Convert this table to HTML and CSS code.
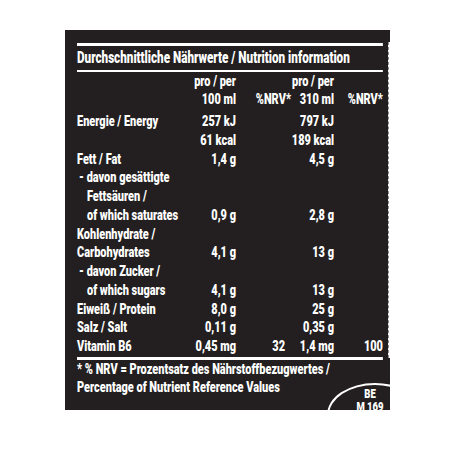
FILE: index.html
```html
<!DOCTYPE html>
<html lang="de">
<head>
  <meta charset="UTF-8">
  <meta name="viewport" content="width=device-width, initial-scale=1.0">
  <title>Nährwerte</title>
  <link rel="stylesheet" href="styles.css">
</head>
<body>
  <div class="panel">
    <div class="inner">
      <div class="rule rule-top"></div>
      <h1>Durchschnittliche Nährwerte / Nutrition information</h1>
      <div class="rule rule-mid"></div>

      <div class="table head">
        <div></div>
        <div class="num">pro / per<br>100 ml</div>
        <div class="num nrv">%NRV*</div>
        <div class="num">pro / per<br>310 ml</div>
        <div class="num nrv">%NRV*</div>
      </div>

      <div class="table body">
        <div>Energie / Energy</div><div class="num">257 kJ</div><div></div><div class="num">797 kJ</div><div></div>
        <div></div><div class="num">61 kcal</div><div></div><div class="num">189 kcal</div><div></div>
        <div>Fett / Fat</div><div class="num">1,4 g</div><div></div><div class="num">4,5 g</div><div></div>
        <div class="sub">- davon gesättigte</div><div></div><div></div><div></div><div></div>
        <div class="sub2">Fettsäuren /</div><div></div><div></div><div></div><div></div>
        <div class="sub2">of which saturates</div><div class="num">0,9 g</div><div></div><div class="num">2,8 g</div><div></div>
        <div>Kohlenhydrate /</div><div></div><div></div><div></div><div></div>
        <div>Carbohydrates</div><div class="num">4,1 g</div><div></div><div class="num">13 g</div><div></div>
        <div class="sub">- davon Zucker /</div><div></div><div></div><div></div><div></div>
        <div class="sub2">of which sugars</div><div class="num">4,1 g</div><div></div><div class="num">13 g</div><div></div>
        <div>Eiweiß / Protein</div><div class="num">8,0 g</div><div></div><div class="num">25 g</div><div></div>
        <div>Salz / Salt</div><div class="num">0,11 g</div><div></div><div class="num">0,35 g</div><div></div>
        <div>Vitamin B6</div><div class="num">0,45 mg</div><div class="num pct">32</div><div class="num">1,4 mg</div><div class="num">100</div>
      </div>

      <div class="rule rule-bottom"></div>
      <p class="footnote">* % NRV = Prozentsatz des Nährstoffbezugwertes /<br>Percentage of Nutrient Reference Values</p>
    </div>

    <div class="stamp">
      <div class="stamp-text">BE<br>M 169</div>
    </div>
  </div>
</body>
</html>
```

FILE: styles.css
```css
html, body {
  margin: 0;
  padding: 0;
  background: #fff;
}

body {
  font-family: Roboto, "Liberation Sans", sans-serif;
  font-weight: 900;
  color: #fff;
  --s: 0.73;
}

.panel {
  position: relative;
  width: 325px;
  height: 380px;
  margin: 30px 0 0 65px;
  padding-top: 13px;
  box-sizing: border-box;
  background-color: #231f20;
  overflow: hidden;
}

/* dotted cut line down the right side */
.panel::after {
  content: "";
  position: absolute;
  top: 12px;
  bottom: 52px;
  right: 0;
  width: 2px;
  background-color: #fff;
  border-left: 1px dashed #8a8a8a;
  box-sizing: border-box;
}

.inner {
  width: calc(306px / var(--s));
  margin-left: 12px;
  transform: scaleX(var(--s));
  transform-origin: left top;
}

.rule {
  background-color: #fff;
}

.rule-top {
  height: 3px;
}

.rule-mid {
  height: 2px;
  margin-top: 2px;
}

.rule-bottom {
  height: 2.5px;
  margin-top: 1.5px;
}

h1 {
  margin: 2px 0 0 0;
  font-size: 16px;
  line-height: 20px;
  font-weight: 900;
}

.table {
  display: grid;
  grid-template-columns:
    calc(108px / var(--s))
    calc(51px / var(--s))
    calc(55px / var(--s))
    calc(43px / var(--s))
    calc(49px / var(--s));
  font-size: 15px;
  white-space: nowrap;
}

.head {
  line-height: 18px;
}

.head .nrv {
  align-self: end;
}

.body {
  margin-top: 4px;
  line-height: 18.75px;
}

.num {
  text-align: right;
}

.pct {
  padding-right: calc(6px / var(--s));
}

.sub {
  padding-left: calc(2px / var(--s));
}

.sub2 {
  padding-left: calc(10px / var(--s));
}

.footnote {
  margin: 0;
  font-size: 15px;
  line-height: 18px;
}

.stamp {
  position: absolute;
  left: 262px;
  top: 353px;
  width: 96px;
  height: 64px;
  border: 2px solid #fff;
  border-radius: 50%;
  box-sizing: border-box;
}

.stamp-text {
  margin-top: 3px;
  font-size: 13px;
  line-height: 12.5px;
  text-align: center;
  margin-left: -10px;
  transform: scaleX(var(--s));
}
```
